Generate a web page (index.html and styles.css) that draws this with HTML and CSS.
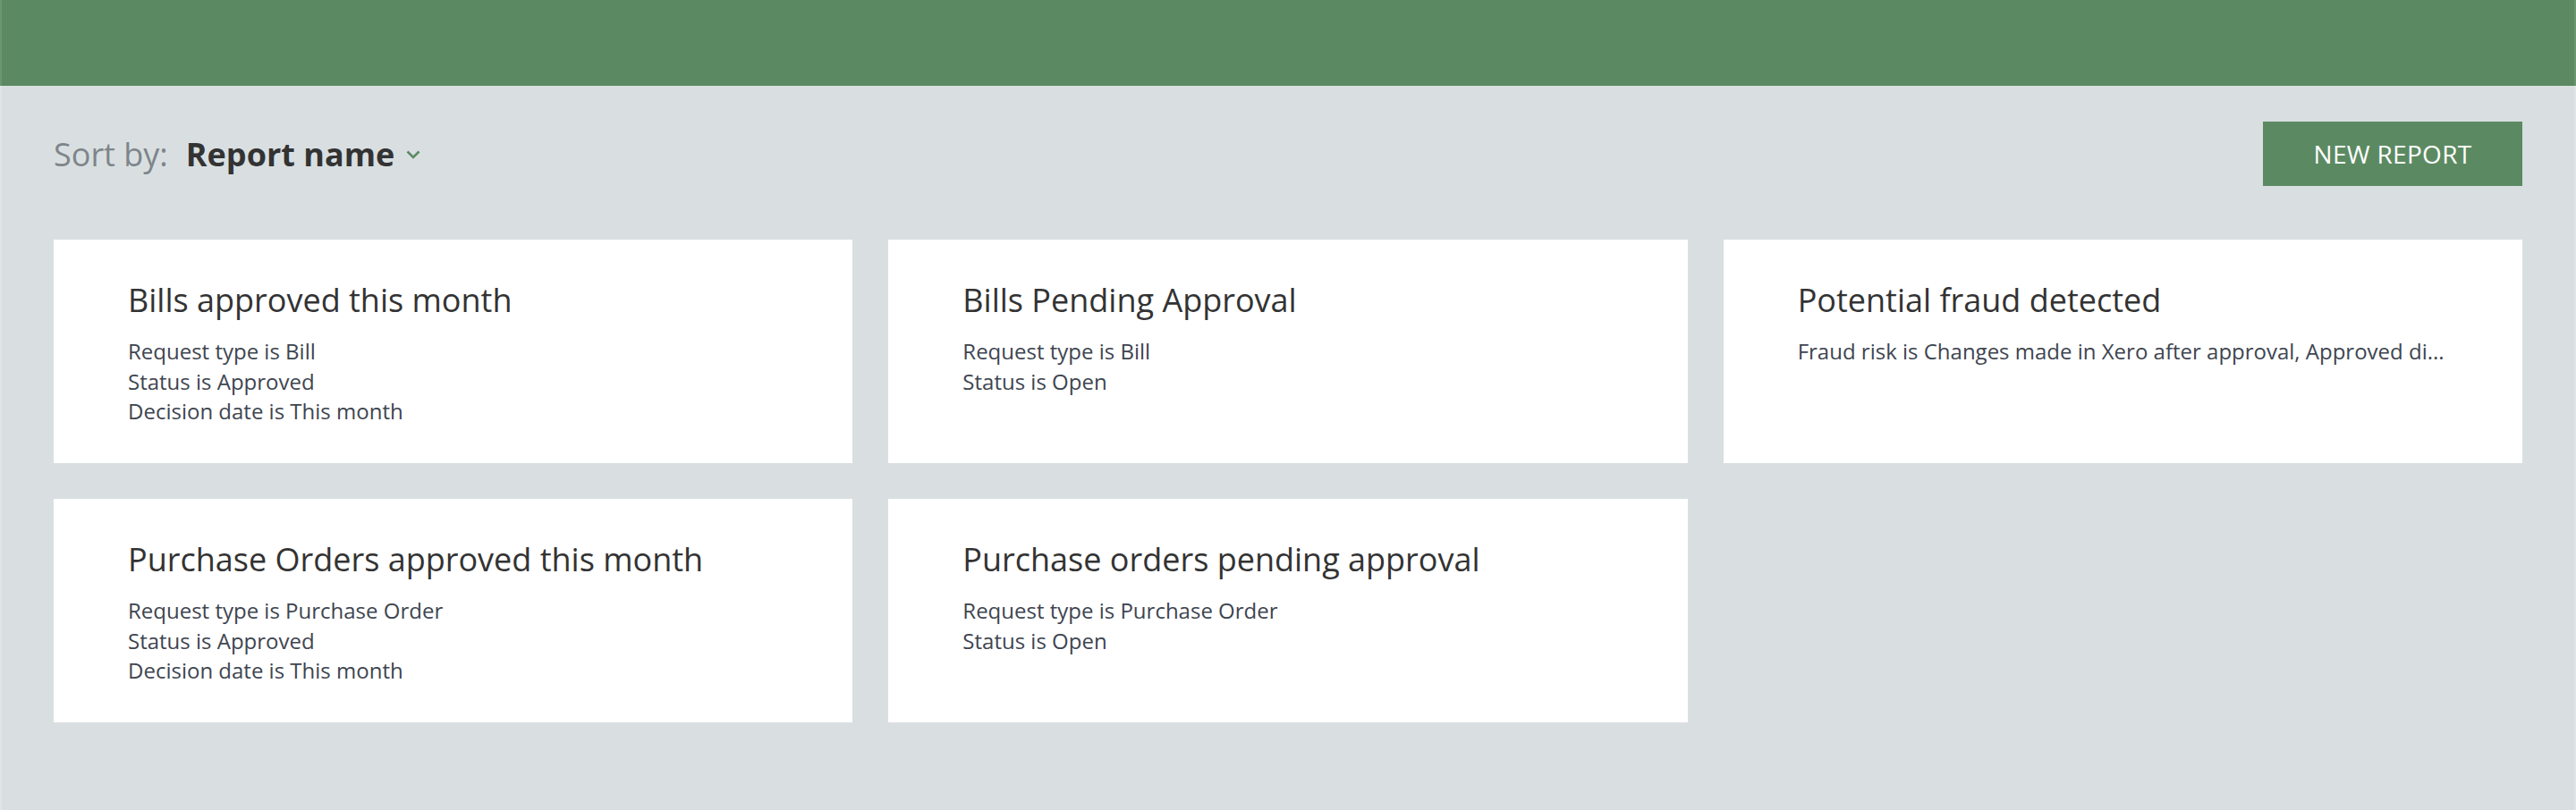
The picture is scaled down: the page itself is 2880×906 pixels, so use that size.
FILE: index.html
```html
<!DOCTYPE html>
<html lang="en">
<head>
<meta charset="utf-8">
<title>Reports</title>
<link rel="stylesheet" href="styles.css">
</head>
<body>
<header class="topbar"></header>
<main class="page">
  <div class="toolbar">
    <div class="sort">
      <span class="sort-label">Sort by:</span>
      <span class="sort-value">Report name</span>
      <svg class="chevron" width="16" height="10" viewBox="0 0 16 10" aria-hidden="true"><path d="M1.5 1.5 L8 8 L14.5 1.5" fill="none" stroke="#5b8a62" stroke-width="2.6"/></svg>
    </div>
    <button class="btn-new">NEW REPORT</button>
  </div>
  <div class="cards">
    <div class="card">
      <div class="card-title">Bills approved this month</div>
      <div class="card-line">Request type is Bill</div>
      <div class="card-line">Status is Approved</div>
      <div class="card-line">Decision date is This month</div>
    </div>
    <div class="card">
      <div class="card-title">Bills Pending Approval</div>
      <div class="card-line">Request type is Bill</div>
      <div class="card-line">Status is Open</div>
    </div>
    <div class="card">
      <div class="card-title">Potential fraud detected</div>
      <div class="card-line">Fraud risk is Changes made in Xero after approval, Approved di...</div>
    </div>
    <div class="card">
      <div class="card-title">Purchase Orders approved this month</div>
      <div class="card-line">Request type is Purchase Order</div>
      <div class="card-line">Status is Approved</div>
      <div class="card-line">Decision date is This month</div>
    </div>
    <div class="card">
      <div class="card-title">Purchase orders pending approval</div>
      <div class="card-line">Request type is Purchase Order</div>
      <div class="card-line">Status is Open</div>
    </div>
  </div>
</main>
</body>
</html>
```
FILE: styles.css
```css
html, body {
  margin: 0;
  padding: 0;
  height: 100%;
}
body {
  background: #d9dfe1;
  font-family: "Open Sans", "Noto Sans", sans-serif;
  color: #333;
}
.topbar {
  height: 96px;
  background: #5b8a62;
  border-left: 2px solid #6c9672;
  border-right: 2px solid #6c9672;
}
.page {
  min-height: 810px;
  border-left: 2px solid #e0e5e7;
  border-right: 2px solid #e0e5e7;
  padding: 0 58px;
}
.toolbar {
  display: flex;
  justify-content: space-between;
  align-items: center;
  padding: 40px 0 60px;
}
.sort {
  display: flex;
  align-items: center;
  font-size: 36px;
}
.sort-label {
  color: #7e858a;
  margin-right: 20px;
}
.sort-value {
  font-weight: 700;
  color: #333;
}
.chevron {
  margin-left: 13px;
  margin-top: 2px;
}
.btn-new {
  width: 290px;
  height: 72px;
  background: #5b8a62;
  border: none;
  color: #fff;
  font-family: inherit;
  font-size: 28px;
  letter-spacing: 0.3px;
  padding: 0;
}
.cards {
  display: grid;
  grid-template-columns: repeat(3, 1fr);
  gap: 40px;
}
.card {
  background: #fff;
  height: 250px;
  box-sizing: border-box;
  padding: 43px 40px 0 83px;
}
.card-title {
  font-size: 36px;
  line-height: 50px;
  color: #333;
  margin-bottom: 15px;
}
.card-line {
  font-size: 24px;
  line-height: 33.6px;
  color: #3e4550;
  white-space: nowrap;
}
```
